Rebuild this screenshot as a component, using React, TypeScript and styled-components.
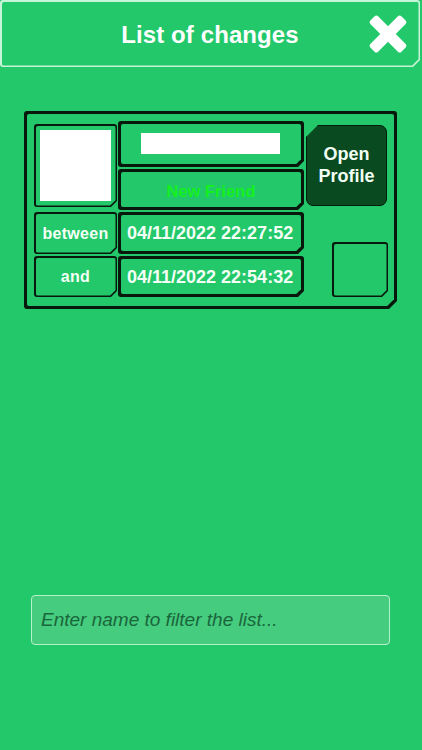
import styled, { createGlobalStyle } from "styled-components"

const GlobalStyle = createGlobalStyle`
  html, body {
    margin: 0;
    padding: 0;
    background: #22c86a;
  }
  * {
    box-sizing: border-box;
  }
`

const GREEN = "#22c86a"
const INK = "#08180d"

const cut = (c: number) =>
  `polygon(0 0, 100% 0, 100% calc(100% - ${c}px), calc(100% - ${c}px) 100%, 0 100%)`

// box with a chamfered bottom-right corner; the border is the outer colour,
// the fill is painted by ::before so the diagonal edge keeps its line
const Chamfer = styled.div<{ $bw: number; $c: number; $line: string; $fill?: string }>`
  position: relative;
  background: ${p => p.$line};
  border-radius: 3px;
  clip-path: ${p => cut(p.$c)};
  &::before {
    content: "";
    position: absolute;
    inset: ${p => p.$bw}px;
    z-index: -1;
    background: ${p => p.$fill || GREEN};
    border-radius: 2px;
    clip-path: ${p => cut(Math.max(p.$c - p.$bw * 0.42, 1))};
  }
`

const Page = styled.div`
  width: 422px;
  height: 750px;
  display: flex;
  flex-direction: column;
  background: ${GREEN};
  font-family: "Liberation Sans", Arial, sans-serif;
`

const Header = styled(Chamfer)`
  width: 420px;
  height: 67px;
  display: grid;
  grid-template-columns: 1fr auto 1fr;
  align-items: center;
`

const Title = styled.h1`
  grid-column: 2;
  margin: 0;
  padding-top: 2px;
  color: #ffffff;
  font-size: 24px;
  font-weight: bold;
  letter-spacing: 0.1px;
`

const Close = styled.button`
  grid-column: 3;
  justify-self: end;
  margin-right: 12px;
  margin-top: 1px;
  padding: 0;
  border: none;
  background: none;
  width: 40px;
  height: 40px;
  display: flex;
`

// padding counts from the outer edge, the 3px line is painted, not a border
const Card = styled(Chamfer)`
  margin: 44px 0 0 24px;
  width: 373px;
  height: 198px;
  padding: 10px 9px 10px 10px;
  display: grid;
  grid-template-columns: 84px 186px 1fr;
  grid-template-rows: 46px 41px 42px 41px;
  row-gap: 2px;
`

const Photo = styled(Chamfer)`
  grid-column: 1;
  grid-row: 1 / 3;
  align-self: center;
  width: 83px;
  height: 83px;
  padding: 6px;
  display: flex;
`

const PhotoFill = styled.div`
  flex: 1;
  background: #ffffff;
`

const Field = styled(Chamfer)<{ $center?: boolean }>`
  grid-column: 2;
  display: flex;
  align-items: center;
  justify-content: ${p => (p.$center ? "center" : "flex-start")};
  padding: 1px 9px 0;
  color: #f4fff6;
  font-size: 18px;
  font-weight: bold;
`

const NameBar = styled.div`
  width: 139px;
  height: 21px;
  background: #ffffff;
  margin-left: 14px;
  margin-top: -2px;
`

const NewFriend = styled.span`
  color: #14f01e;
  font-size: 16.5px;
  padding-top: 2px;
`

const Label = styled(Chamfer)`
  grid-column: 1;
  width: 83px;
  display: flex;
  align-items: center;
  justify-content: center;
  padding-top: 1px;
  color: #f4fff6;
  font-size: 16px;
  font-weight: bold;
  letter-spacing: 0.3px;
`

const OpenProfile = styled.button`
  grid-column: 3;
  grid-row: 1 / 3;
  align-self: center;
  margin-left: 2px;
  width: 81px;
  height: 81px;
  border: 1px solid #041a0a;
  border-radius: 7px;
  background: #0a4a20;
  clip-path: polygon(12px 0, 100% 0, 100% 100%, 0 100%, 0 12px);
  color: #f2fff4;
  font-family: "Liberation Sans", Arial, sans-serif;
  font-size: 18px;
  font-weight: bold;
  line-height: 22px;
  padding: 0 0 2px;
`

const Spare = styled(Chamfer)`
  grid-column: 3;
  grid-row: 3 / 5;
  align-self: end;
  justify-self: end;
  width: 56px;
  height: 55px;
`

const Filter = styled.input`
  margin: 286px 0 0 31px;
  width: 359px;
  height: 50px;
  padding: 0 9px;
  border: 1.5px solid #b6f0cb;
  border-radius: 4px;
  background: #45cc7f;
  font-family: "Liberation Sans", Arial, sans-serif;
  font-size: 19px;
  font-style: italic;
  color: #17633a;
  outline: none;
  &::placeholder {
    color: #1a663b;
  }
`

const CloseIcon = () => (
  <svg width="40" height="40" viewBox="0 0 40 40">
    <g fill="#ffffff" transform="rotate(45 20 20)">
      <rect x="-2" y="14.5" width="44" height="11" rx="2.5" />
      <rect x="14.5" y="-2" width="11" height="44" rx="2.5" />
    </g>
  </svg>
)

const App = () => {
  return (
    <>
      <GlobalStyle />
      <Page>
        <Header $bw={1.5} $c={7} $line="#c6f4d6">
          <Title>List of changes</Title>
          <Close aria-label="close">
            <CloseIcon />
          </Close>
        </Header>

        <Card $bw={3} $c={8} $line={INK}>
          <Photo $bw={1.5} $c={6} $line={INK}>
            <PhotoFill />
          </Photo>
          <Field $bw={3} $c={6} $line={INK} style={{ gridRow: 1 }}>
            <NameBar />
          </Field>
          <Field $bw={3} $c={6} $line={INK} $center style={{ gridRow: 2 }}>
            <NewFriend>New Friend</NewFriend>
          </Field>
          <OpenProfile>
            Open
            <br />
            Profile
          </OpenProfile>

          <Label $bw={1.5} $c={6} $line={INK} style={{ gridRow: 3 }}>between</Label>
          <Field $bw={3} $c={6} $line={INK} style={{ gridRow: 3 }}>04/11/2022 22:27:52</Field>
          <Label $bw={1.5} $c={6} $line={INK} style={{ gridRow: 4 }}>and</Label>
          <Field $bw={3} $c={6} $line={INK} style={{ gridRow: 4 }}>04/11/2022 22:54:32</Field>
          <Spare $bw={1.5} $c={6} $line={INK} />
        </Card>

        <Filter placeholder="Enter name to filter the list..." />
      </Page>
    </>
  )
}

export default App
